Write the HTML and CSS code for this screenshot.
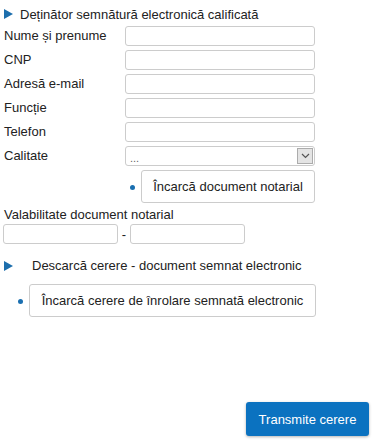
FILE: index.html
```html
<!DOCTYPE html>
<html lang="ro">
<head>
    <meta charset="UTF-8">
    <meta name="viewport" content="width=device-width, initial-scale=1.0">
    <title>Cerere de înrolare</title>
    <link rel="stylesheet" href="styles.css">
</head>
<body>
    <div class="form-page">
        <div class="section-title">
            <span class="arrow"></span>
            <span>Deținător semnătură electronică calificată</span>
        </div>
        <div class="form-grid">
            <label>Nume și prenume</label>
            <input type="text" class="field">
            <label>CNP</label>
            <input type="text" class="field">
            <label>Adresă e-mail</label>
            <input type="text" class="field">
            <label>Funcție</label>
            <input type="text" class="field">
            <label>Telefon</label>
            <input type="text" class="field">
            <label>Calitate</label>
            <div class="select">
                <span class="select-value">...</span>
                <span class="select-arrow">
                    <svg width="9" height="6" viewBox="0 0 9 6"><path d="M1 1l3.5 3.5L8 1" fill="none" stroke="#555" stroke-width="1.2"/></svg>
                </span>
            </div>
        </div>
        <div class="upload-row right">
            <span class="bullet"></span>
            <button class="upload-btn notarial">Încarcă document notarial</button>
        </div>
        <div class="valid-label">Valabilitate document notarial</div>
        <div class="valid-row">
            <input type="text" class="field small">
            <span class="dash">-</span>
            <input type="text" class="field small">
        </div>
        <div class="download-row">
            <span class="arrow"></span>
            <span class="download-text">Descarcă cerere - document semnat electronic</span>
        </div>
        <div class="upload-row left">
            <span class="bullet"></span>
            <button class="upload-btn wide">Încarcă cerere de înrolare semnată electronic</button>
        </div>
        <div class="actions">
            <button class="submit">Transmite cerere</button>
        </div>
    </div>
</body>
</html>
```

FILE: styles.css
```css
body {
    margin: 0;
    background-color: #fff;
    font-family: "Liberation Sans", Arial, sans-serif;
    font-size: 13px;
    color: #222;
}
.form-page {
    display: flex;
    flex-direction: column;
    height: 447px;
    padding: 6px 8px 11px 4px;
    box-sizing: border-box;
}
.section-title {
    display: flex;
    align-items: center;
    height: 16px;
    margin-bottom: 4px;
}
.arrow {
    width: 0;
    height: 0;
    border-top: 5px solid transparent;
    border-bottom: 5px solid transparent;
    border-left: 9px solid #1d6fad;
    margin-right: 7px;
}
.form-grid {
    display: grid;
    grid-template-columns: 121px 190px;
    row-gap: 4px;
    align-items: center;
}
.form-grid label {
    line-height: 20px;
}
.field {
    height: 20px;
    box-sizing: border-box;
    border: 1px solid #ccc;
    border-radius: 3px;
    margin: 0;
    padding: 0 4px;
    background: #fff;
}
.select {
    display: flex;
    align-items: center;
    justify-content: space-between;
    height: 20px;
    box-sizing: border-box;
    border: 1px solid #ccc;
    border-radius: 3px;
    padding: 0 1px 0 4px;
}
.select-value {
    color: #666;
    font-size: 11px;
    line-height: 20px;
    position: relative;
    top: 2px;
}
.select-arrow {
    display: flex;
    align-items: center;
    justify-content: center;
    width: 16px;
    height: 16px;
    box-sizing: border-box;
    background: #e4e4e4;
    border: 1px solid #acacac;
}
.upload-row {
    display: flex;
    align-items: center;
    gap: 6px;
    margin-top: 4px;
}
.upload-row.right {
    justify-content: flex-end;
    width: 311px;
}
.upload-row.left {
    margin-top: 2px;
    padding-left: 14px;
}
.bullet {
    width: 5px;
    height: 5px;
    border-radius: 50%;
    background: #1a6fb0;
    margin-top: 2px;
}
.upload-btn {
    height: 33px;
    background: #fff;
    border: 1px solid #ccc;
    border-radius: 3px;
    font-family: inherit;
    font-size: 13px;
    color: #222;
    padding: 0 11px;
}
.upload-btn.notarial {
    width: 174px;
}
.upload-btn.wide {
    width: 287px;
}
.valid-label {
    margin-top: 4px;
    line-height: 15px;
}
.valid-row {
    display: flex;
    align-items: center;
    margin: 2px 0 0 -1px;
}
.field.small {
    width: 115px;
}
.dash {
    width: 12px;
    text-align: center;
}
.download-row {
    display: flex;
    align-items: center;
    height: 33px;
    margin-top: 5px;
}
.download-row .arrow {
    margin-right: 19px;
}
.actions {
    margin-top: auto;
    display: flex;
    justify-content: flex-end;
}
.submit {
    width: 123px;
    height: 34px;
    background: #0b72c0;
    color: #fff;
    border: none;
    border-radius: 3px;
    box-shadow: 0 1px 3px rgba(0, 0, 0, 0.3);
    font-family: inherit;
    font-size: 13px;
    cursor: pointer;
}
```
